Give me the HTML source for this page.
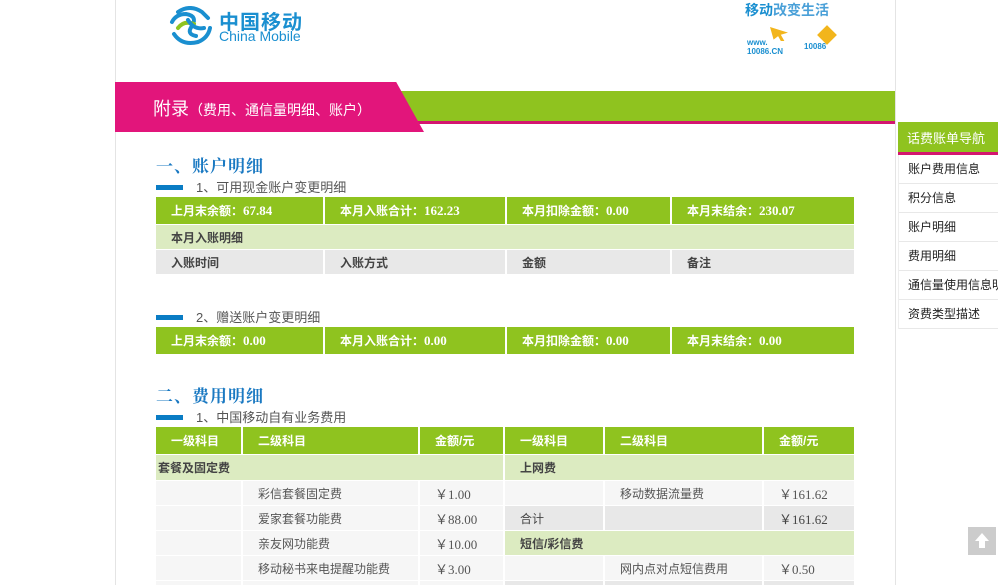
<!DOCTYPE html>
<html><head><meta charset="utf-8"><style>
*{margin:0;padding:0;box-sizing:border-box}
html,body{width:1007px;height:585px;overflow:hidden}
body{background:#fff;font-family:"Liberation Sans","Noto Sans CJK SC",sans-serif;font-size:12px;color:#333;position:relative}
.abs{position:absolute}
.wrap{position:absolute;left:115px;top:0;width:781px;height:585px;border-left:1px solid #e4e4e4;border-right:1px solid #e4e4e4}
.row{position:absolute;left:156px;width:698px;display:flex;gap:2px}
.row div{height:100%;display:flex;align-items:center;padding-left:15px;font-weight:bold;font-size:12px}
.row .num{font-family:"Liberation Serif","Noto Sans CJK SC",serif;font-size:13px}
.g{background:#8fc31f;color:#fff}
.lg{background:#dcebc1;color:#444}
.gr{background:#e8e8e8;color:#444}
.wh{background:#f6f6f6;color:#555}
.n{font-weight:normal!important}
h2{position:absolute;left:156px;font-family:"Liberation Serif","Noto Serif CJK SC",serif;font-size:17px;color:#1a79c2;font-weight:bold;letter-spacing:1px}
.sub{position:absolute;left:156px;font-size:13px;color:#555}
.sub i{display:inline-block;width:27px;height:5px;background:#0a7cc4;vertical-align:middle;margin-right:13px;margin-top:-3px}
.side div{height:29px;border-bottom:1px solid #e8e8e8;padding-left:9px;line-height:28px;font-size:12px;color:#222;white-space:nowrap;overflow:hidden}
</style></head><body>
<div class="wrap"></div>
<svg class="abs" style="left:168px;top:6px" width="46" height="42" viewBox="0 0 46 42">
<g fill="none" stroke-width="4" stroke-linecap="round">
<path d="M10 6 Q22 -2 34 6 L40 12" stroke="#1a8fd0"/>
<path d="M4 16 Q8 8 18 8 Q30 10 24 20 Q18 28 28 30" stroke="#1a8fd0"/>
<path d="M10 22 Q16 14 26 18" stroke="#8fc31f"/>
<path d="M6 28 Q14 40 30 36 Q40 32 42 22" stroke="#1a8fd0"/>
<path d="M20 14 Q26 24 36 22" stroke="#1a8fd0"/>
</g></svg>
<div class="abs" style="left:219px;top:6px;font-size:20px;color:#1a8fd0;font-weight:bold;letter-spacing:1px">中国移动</div>
<div class="abs" style="left:219px;top:28px;font-size:14px;color:#1a8fd0">China Mobile</div>
<div class="abs" style="left:745px;top:0px;font-size:14px;color:#1a8fd0;font-weight:bold">移动<span style="color:#4aa0d8">改变生活</span></div>
<div class="abs" style="left:747px;top:38px;font-size:8px;color:#1a8fd0;font-weight:bold;line-height:9px">www.<br>10086.CN</div>
<div class="abs" style="left:770px;top:27px;width:18px;height:14px;background:#f2b51c;clip-path:polygon(0 0,100% 40%,60% 55%,80% 100%,60% 100%,45% 65%,20% 90%)"></div>
<div class="abs" style="left:804px;top:42px;font-size:8px;color:#1a8fd0;font-weight:bold">10086</div>
<div class="abs" style="left:820px;top:28px;width:14px;height:14px;background:#f2b51c;transform:rotate(45deg)"></div>
<div class="abs" style="left:395px;top:91px;width:500px;height:31px;background:#8fc31f"></div>
<div class="abs" style="left:395px;top:121px;width:500px;height:3px;background:#d4166f"></div>
<div class="abs" style="left:115px;top:82px;width:309px;height:50px;background:#e2157b;clip-path:polygon(0 0,91% 0,100% 100%,0 100%)"></div>
<div class="abs" style="left:153px;top:95px;font-size:18px;color:#fff">附录<span style="font-size:14px">（费用、通信量明细、账户）</span></div>
<h2 style="top:152px">一、账户明细</h2>
<div class="sub" style="top:177px"><i></i>1、可用现金账户变更明细</div>
<div class="row" style="top:197px;height:27px"><div class="g" style="width:167px">上月末余额：<span class="num">67.84</span></div><div class="g" style="width:180px">本月入账合计：<span class="num">162.23</span></div><div class="g" style="width:163px">本月扣除金额：<span class="num">0.00</span></div><div class="g" style="flex:1">本月末结余：<span class="num">230.07</span></div></div>
<div class="row" style="top:225px;height:24px"><div class="lg" style="flex:1">本月入账明细</div></div>
<div class="row" style="top:250px;height:24px"><div class="gr" style="width:167px">入账时间</div><div class="gr" style="width:180px">入账方式</div><div class="gr" style="width:163px">金额</div><div class="gr" style="flex:1">备注</div></div>
<div class="sub" style="top:307px"><i></i>2、赠送账户变更明细</div>
<div class="row" style="top:327px;height:27px"><div class="g" style="width:167px">上月末余额：<span class="num">0.00</span></div><div class="g" style="width:180px">本月入账合计：<span class="num">0.00</span></div><div class="g" style="width:163px">本月扣除金额：<span class="num">0.00</span></div><div class="g" style="flex:1">本月末结余：<span class="num">0.00</span></div></div>
<h2 style="top:382px">二、费用明细</h2>
<div class="sub" style="top:407px"><i></i>1、中国移动自有业务费用</div>
<div class="row" style="top:427px;height:27px"><div class="g" style="width:85px">一级科目</div><div class="g" style="width:175px">二级科目</div><div class="g" style="width:83px">金额/元</div><div class="g" style="width:98px">一级科目</div><div class="g" style="width:157px">二级科目</div><div class="g" style="flex:1">金额/元</div></div>
<div class="row" style="top:455px;height:25px"><div class="lg" style="width:347px;padding-left:2px">套餐及固定费</div><div class="lg" style="flex:1">上网费</div></div>
<div class="row" style="top:481px;height:24px"><div class="wh" style="width:85px"></div><div class="wh n" style="width:175px">彩信套餐固定费</div><div class="wh n num" style="width:83px">￥1.00</div><div class="wh" style="width:98px"></div><div class="wh n" style="width:157px">移动数据流量费</div><div class="wh n num" style="flex:1">￥161.62</div></div>
<div class="row" style="top:506px;height:24px"><div class="wh" style="width:85px"></div><div class="wh n" style="width:175px">爱家套餐功能费</div><div class="wh n num" style="width:83px">￥88.00</div><div class="gr n" style="width:98px">合计</div><div class="gr" style="width:157px"></div><div class="gr n num" style="flex:1">￥161.62</div></div>
<div class="row" style="top:531px;height:24px"><div class="wh" style="width:85px"></div><div class="wh n" style="width:175px">亲友网功能费</div><div class="wh n num" style="width:83px">￥10.00</div><div class="lg" style="flex:1">短信/彩信费</div></div>
<div class="row" style="top:556px;height:24px"><div class="wh" style="width:85px"></div><div class="wh n" style="width:175px">移动秘书来电提醒功能费</div><div class="wh n num" style="width:83px">￥3.00</div><div class="wh" style="width:98px"></div><div class="wh n" style="width:157px">网内点对点短信费用</div><div class="wh n num" style="flex:1">￥0.50</div></div>
<div class="row" style="top:581px;height:4px"><div class="wh" style="width:85px"></div><div class="wh" style="width:175px"></div><div class="wh" style="width:83px"></div><div class="gr" style="width:98px"></div><div class="gr" style="width:157px"></div><div class="gr" style="flex:1"></div></div>
<div class="abs" style="left:898px;top:122px;width:100px;height:31px;background:#8fc31f;color:#fff;font-size:13px;line-height:33px;padding-left:9px">话费账单导航</div>
<div class="abs" style="left:898px;top:152px;width:100px;height:3px;background:#d4166f"></div>
<div class="abs side" style="left:898px;top:155px;width:100px;border-left:1px solid #eee">
<div>账户费用信息</div><div>积分信息</div><div>账户明细</div><div>费用明细</div><div>通信量使用信息明细</div><div>资费类型描述</div></div>
<div class="abs" style="left:968px;top:527px;width:28px;height:28px;background:#ccc"></div>
<svg class="abs" style="left:968px;top:527px" width="28" height="28"><path d="M14 6 L21 14 L17 14 L17 21 L11 21 L11 14 L7 14 Z" fill="#fff"/></svg>
</body></html>
